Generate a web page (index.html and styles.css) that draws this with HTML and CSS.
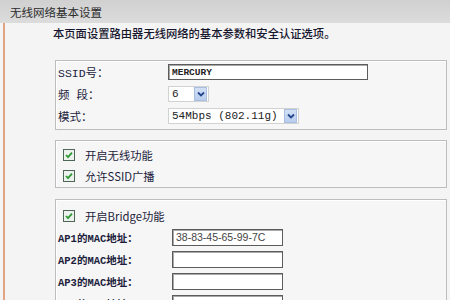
FILE: index.html
```html
<!doctype html>
<html lang="zh-CN">
<head>
    <meta charset="UTF-8">
    <title>无线网络基本设置</title>
    <link rel="stylesheet" href="styles.css">
</head>
<body>
    <div class="header">无线网络基本设置</div>

    <div class="page">
        <div class="intro">本页面设置路由器无线网络的基本参数和安全认证选项。</div>

        <div class="box box-basic">
            <div class="row">
                <span class="label">SSID号：</span>
                <div class="field ssid">MERCURY</div>
            </div>
            <div class="row">
                <span class="label">频 段：</span>
                <div class="select narrow">
                    <span>6</span>
                    <span class="arrow"><svg width="8" height="6" viewBox="0 0 8 6"><path d="M1 1.5 L4 4.5 L7 1.5" fill="none" stroke="#23468c" stroke-width="1.8"/></svg></span>
                </div>
            </div>
            <div class="row">
                <span class="label">模式：</span>
                <div class="select wide">
                    <span>54Mbps (802.11g)</span>
                    <span class="arrow"><svg width="8" height="6" viewBox="0 0 8 6"><path d="M1 1.5 L4 4.5 L7 1.5" fill="none" stroke="#23468c" stroke-width="1.8"/></svg></span>
                </div>
            </div>
        </div>

        <div class="box box-checks">
            <div class="check-row">
                <svg class="check" width="12" height="12" viewBox="0 0 12 12"><rect x="0.5" y="0.5" width="11" height="11" fill="#eef2ee" stroke="#4d6657"/><path d="M3 6 L5 8.2 L9 3.6" fill="none" stroke="#2f9a34" stroke-width="1.8"/></svg>
                <span>开启无线功能</span>
            </div>
            <div class="check-row">
                <svg class="check" width="12" height="12" viewBox="0 0 12 12"><rect x="0.5" y="0.5" width="11" height="11" fill="#eef2ee" stroke="#4d6657"/><path d="M3 6 L5 8.2 L9 3.6" fill="none" stroke="#2f9a34" stroke-width="1.8"/></svg>
                <span>允许SSID广播</span>
            </div>
        </div>

        <div class="box box-bridge">
            <div class="check-row">
                <svg class="check" width="12" height="12" viewBox="0 0 12 12"><rect x="0.5" y="0.5" width="11" height="11" fill="#eef2ee" stroke="#4d6657"/><path d="M3 6 L5 8.2 L9 3.6" fill="none" stroke="#2f9a34" stroke-width="1.8"/></svg>
                <span>开启Bridge功能</span>
            </div>
            <div class="row">
                <span class="label mac">AP1的MAC地址：</span>
                <div class="field mac-field">38-83-45-65-99-7C</div>
            </div>
            <div class="row">
                <span class="label mac">AP2的MAC地址：</span>
                <div class="field mac-field"></div>
            </div>
            <div class="row">
                <span class="label mac">AP3的MAC地址：</span>
                <div class="field mac-field"></div>
            </div>
            <div class="row">
                <span class="label mac">AP4的MAC地址：</span>
                <div class="field mac-field"></div>
            </div>
        </div>
    </div>
</body>
</html>
```

FILE: styles.css
```css
body {
    margin: 0;
    background-color: #f4f4f4;
    font-family: "Liberation Mono", "Noto Sans CJK SC", monospace;
    font-size: 11.5px;
    color: #1d1d3c;
}

.header {
    height: 23px;
    background: linear-gradient(#d0d0d0, #dcdcdc);
    display: flex;
    align-items: center;
    padding-left: 10px;
    color: #2b2b2b;
    font-family: "Noto Sans CJK SC", sans-serif;
}

.page {
    margin-left: 3px;
    border-left: 2px solid #e3a385;
    padding: 0 3px 20px 50px;
}

.intro {
    padding-top: 4px;
    height: 12px;
    line-height: 12px;
    margin-left: -2px;
    margin-bottom: 21px;
    font-family: "Noto Sans CJK SC", sans-serif;
    font-size: 11.3px;
    font-weight: 500;
    color: #16162e;
}

.box {
    border: 1px solid #bdbdbd;
    box-shadow: inset 1px 1px 0 #ffffff;
    background-color: #f6f6f6;
    margin-bottom: 10px;
}

.box-basic {
    padding: 0 2px 2px;
}

.box-checks {
    padding: 3px 2px 1px;
}

.box-bridge {
    margin-top: 11px;
    padding: 5px 2px 0;
}

.row {
    height: 22px;
    display: flex;
    align-items: center;
}

.label {
    width: 110px;
    flex-shrink: 0;
}

.label.mac {
    width: 114px;
    font-weight: bold;
    font-size: 10.5px;
}

.field {
    height: 14px;
    border: 1px solid #5c5c5c;
    box-shadow: inset 1px 1px 0 #a8a8a8;
    background-color: #ffffff;
    display: flex;
    align-items: center;
    padding-left: 3px;
    box-sizing: content-box;
}

.ssid {
    width: 195px;
    font-size: 9.5px;
    font-weight: bold;
    color: #222;
}

.mac-field {
    width: 106px;
    height: 15px;
    font-family: "Liberation Sans", sans-serif;
    font-size: 10.5px;
    color: #444;
}

.select {
    height: 14px;
    border: 1px solid #d2d2d2;
    background-color: #ffffff;
    display: flex;
    align-items: center;
    justify-content: space-between;
    padding-left: 3px;
    font-size: 11px;
    color: #222;
}

.narrow {
    width: 36px;
}

.wide {
    width: 126px;
}

.arrow {
    width: 11px;
    height: 12px;
    margin-right: 1px;
    background: linear-gradient(#d3e0f5, #b9cdee);
    border: 1px solid #a9bfe2;
    display: flex;
    align-items: center;
    justify-content: center;
}

.check-row {
    height: 21px;
    display: flex;
    align-items: center;
    padding-left: 5px;
    gap: 10px;
    font-family: "Noto Sans CJK SC", sans-serif;
    font-size: 11.3px;
}

.check {
    flex-shrink: 0;
}
```
